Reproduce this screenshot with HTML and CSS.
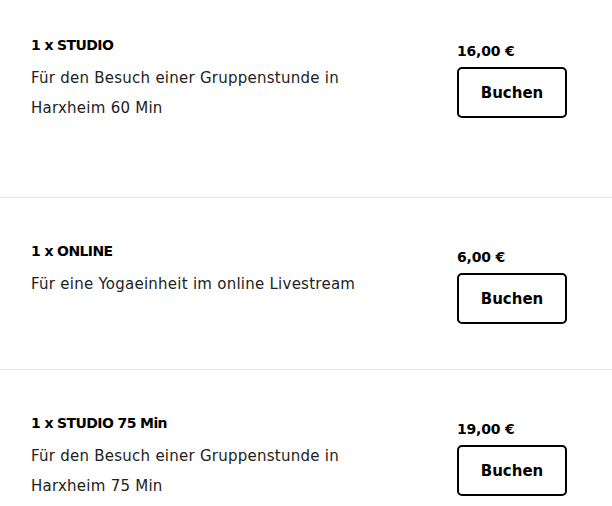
FILE: index.html
```html
<!DOCTYPE html>
<html lang="de">
<head>
<meta charset="utf-8">
<title>Preise</title>
<link rel="stylesheet" href="styles.css">
</head>
<body>
<div class="list">
  <div class="row row-first">
    <div class="info">
      <h3 class="title">1 x STUDIO</h3>
      <p class="desc">Für den Besuch einer Gruppenstunde in Harxheim 60 Min</p>
    </div>
    <div class="buy">
      <div class="price">16,00 €</div>
      <button class="btn">Buchen</button>
    </div>
  </div>
  <div class="row row-short">
    <div class="info">
      <h3 class="title">1 x ONLINE</h3>
      <p class="desc">Für eine Yogaeinheit im online Livestream</p>
    </div>
    <div class="buy">
      <div class="price">6,00 €</div>
      <button class="btn">Buchen</button>
    </div>
  </div>
  <div class="row">
    <div class="info">
      <h3 class="title">1 x STUDIO 75 Min</h3>
      <p class="desc">Für den Besuch einer Gruppenstunde in Harxheim 75 Min</p>
    </div>
    <div class="buy">
      <div class="price">19,00 €</div>
      <button class="btn">Buchen</button>
    </div>
  </div>
</div>
</body>
</html>
```

FILE: styles.css
```css
html, body {
  margin: 0;
  padding: 0;
  background: #fff;
}
body {
  font-family: "DejaVu Sans", "Open Sans", sans-serif;
  color: #000;
  overflow: hidden;
}
.row {
  display: grid;
  grid-template-columns: 1fr 110px;
  column-gap: 40px;
  padding: 43px 45px 46px 31px;
  border-bottom: 1px solid #e6e6e6;
}
.row-first {
  padding-top: 35px;
  height: 198px;
  box-sizing: border-box;
}
.row-short {
  height: 172px;
  box-sizing: border-box;
}
.title {
  margin: 0;
  font-size: 14px;
  font-weight: 700;
  line-height: 21px;
  letter-spacing: -0.6px;
}
.desc {
  margin: 7px 0 0;
  font-size: 15px;
  line-height: 30px;
  letter-spacing: 0.25px;
  color: #222;
  max-width: 340px;
}
.buy {
  padding-top: 6px;
  display: flex;
  flex-direction: column;
  gap: 6px;
}
.price {
  font-size: 14px;
  font-weight: 700;
  line-height: 20px;
  letter-spacing: -0.2px;
}
.btn {
  width: 110px;
  height: 51px;
  box-sizing: border-box;
  border: 2px solid #000;
  border-radius: 5px;
  background: #fff;
  font-family: inherit;
  font-size: 15px;
  font-weight: 700;
  color: #000;
  padding: 0;
}
```
